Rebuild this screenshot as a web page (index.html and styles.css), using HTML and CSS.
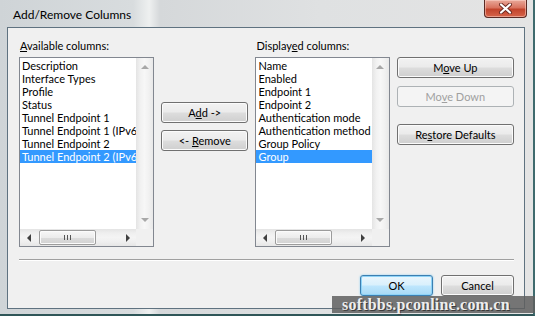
FILE: index.html
```html
<!DOCTYPE html>
<html lang="en">

<head>
  <meta charset="UTF-8" />
  <title>Add/Remove Columns</title>
  <link rel="stylesheet" href="styles.css">
</head>

<body>
  <div class="window">
    <div class="titlebar">
      <span class="title">Add/Remove Columns</span>
      <button class="close">
        <svg width="15" height="11" viewBox="0 0 15 11">
          <path d="M3 1.5 L12 9.5 M12 1.5 L3 9.5" stroke="#6b2a22" stroke-width="4" stroke-linecap="round" />
          <path d="M3 1.5 L12 9.5 M12 1.5 L3 9.5" stroke="#ffffff" stroke-width="2.2" stroke-linecap="round" />
        </svg>
      </button>
    </div>

    <div class="client">
      <div class="columns">
        <!-- 왼쪽 목록 -->
        <div class="group">
          <div class="caption"><u>A</u>vailable columns:</div>
          <div class="listbox">
            <div class="list-body">
              <ul class="items">
                <li>Description</li>
                <li>Interface Types</li>
                <li>Profile</li>
                <li>Status</li>
                <li>Tunnel Endpoint 1</li>
                <li>Tunnel Endpoint 1 (IPv6)</li>
                <li>Tunnel Endpoint 2</li>
                <li class="selected">Tunnel Endpoint 2 (IPv6)</li>
              </ul>
              <div class="vscroll">
                <span class="arrow-up"></span>
                <span class="arrow-down"></span>
              </div>
            </div>
            <div class="hscroll">
              <span class="hbtn"><span class="arrow-left"></span></span>
              <div class="htrack">
                <span class="thumb"><span class="grip"></span></span>
              </div>
              <span class="hbtn"><span class="arrow-right"></span></span>
              <span class="corner"></span>
            </div>
          </div>
        </div>

        <div class="mid-buttons">
          <button class="btn">A<u>d</u>d -&gt;</button>
          <button class="btn">&lt;- <u>R</u>emove</button>
        </div>

        <!-- 오른쪽 목록 -->
        <div class="group">
          <div class="caption">Display<u>e</u>d columns:</div>
          <div class="listbox">
            <div class="list-body">
              <ul class="items">
                <li>Name</li>
                <li>Enabled</li>
                <li>Endpoint 1</li>
                <li>Endpoint 2</li>
                <li>Authentication mode</li>
                <li>Authentication method</li>
                <li>Group Policy</li>
                <li class="selected">Group</li>
              </ul>
              <div class="vscroll">
                <span class="arrow-up"></span>
                <span class="arrow-down"></span>
              </div>
            </div>
            <div class="hscroll">
              <span class="hbtn"><span class="arrow-left"></span></span>
              <div class="htrack">
                <span class="thumb"><span class="grip"></span></span>
              </div>
              <span class="hbtn"><span class="arrow-right"></span></span>
              <span class="corner"></span>
            </div>
          </div>
        </div>

        <div class="side-buttons">
          <button class="btn">M<u>o</u>ve Up</button>
          <button class="btn" disabled>Mo<u>v</u>e Down</button>
          <button class="btn restore">Re<u>s</u>tore Defaults</button>
        </div>
      </div>

      <div class="separator"></div>

      <div class="footer">
        <button class="btn default">OK</button>
        <button class="btn">Cancel</button>
      </div>
    </div>

    <div class="watermark">softbbs.pconline.com.cn</div>
  </div>
</body>

</html>
```

FILE: styles.css
```css
* {
  box-sizing: border-box;
}

body {
  margin: 0;
  width: 535px;
  height: 316px;
  overflow: hidden;
  font-family: Lato, "Liberation Sans", sans-serif;
  font-size: 11px;
  color: #000;
}

.window {
  position: relative;
  width: 535px;
  height: 316px;
  padding: 0 8px 7px 7px;
  background: linear-gradient(90deg, #cfd4d7 0%, #d8dcde 25%, #eef0f0 28%, #d5d8da 30%, #dfe1e2 60%, #e4e4e4 100%);
  border-right: 2px solid #3f6b6e;
  border-bottom: 2px solid #2f5658;
}

.titlebar {
  height: 27px;
  display: flex;
  justify-content: space-between;
  align-items: flex-start;
}

.title {
  font-size: 12px;
  padding: 7px 0 0 6px;
  color: #000;
}

.close {
  width: 43px;
  height: 18px;
  margin-right: -2px;
  padding: 0;
  border: 1px solid #5a2a24;
  border-top: none;
  border-radius: 0 0 4px 4px;
  background: linear-gradient(#e9a99a 0%, #d9735f 45%, #c2442c 55%, #d6644a 100%);
  box-shadow: inset 0 0 0 1px rgba(255, 220, 210, 0.5);
  display: flex;
  justify-content: center;
  align-items: center;
}

.client {
  height: 282px;
  border: 1px solid #5f7280;
  background: #f0f0f0;
  padding: 10px 10px 0 11px;
}

.columns {
  display: flex;
  gap: 7px;
}

.group {
  width: 135px;
}

.caption {
  height: 15px;
  line-height: 15px;
  margin-bottom: 4px;
  padding-left: 1px;
}

.listbox {
  height: 190px;
  border: 1px solid #828790;
  background: #fff;
  display: flex;
  flex-direction: column;
}

.list-body {
  flex: 1;
  display: flex;
  min-height: 0;
}

.items {
  flex: 1;
  list-style: none;
  margin: 0;
  padding: 1px 0 0 0;
  overflow: hidden;
}

.items li {
  height: 13px;
  line-height: 13px;
  padding-left: 2px;
  white-space: nowrap;
  overflow: hidden;
}

.items li.selected {
  background: #3399ff;
  color: #fff;
}

.vscroll {
  width: 17px;
  background: linear-gradient(90deg, #e4e4e4, #f1f1f1 25%, #f7f7f7 50%, #f1f1f1 75%, #e8e8e8);
  display: flex;
  flex-direction: column;
  justify-content: space-between;
  align-items: center;
  padding: 7px 0 7px;
}

.arrow-up {
  border-left: 4px solid transparent;
  border-right: 4px solid transparent;
  border-bottom: 4px solid #a8a8a8;
}

.arrow-down {
  border-left: 4px solid transparent;
  border-right: 4px solid transparent;
  border-top: 4px solid #a8a8a8;
}

.hscroll {
  height: 17px;
  display: flex;
  background: linear-gradient(#e4e4e4, #efefef 25%, #f4f4f4 50%, #efefef 75%, #e6e6e6);
}

.hbtn {
  width: 17px;
  display: flex;
  justify-content: center;
  align-items: center;
}

.arrow-left {
  border-top: 4px solid transparent;
  border-bottom: 4px solid transparent;
  border-right: 4px solid #404040;
}

.arrow-right {
  border-top: 4px solid transparent;
  border-bottom: 4px solid transparent;
  border-left: 4px solid #404040;
}

.htrack {
  flex: 1;
  padding: 1px 0;
}

.thumb {
  display: flex;
  justify-content: center;
  align-items: center;
  width: 57px;
  height: 15px;
  margin-left: 2px;
  border: 1px solid #9c9c9c;
  border-radius: 2px;
  background: linear-gradient(#f7f7f7 0%, #ececec 50%, #dcdcdc 51%, #d2d2d2 100%);
  box-shadow: inset 0 0 0 1px #fbfbfb;
}

.grip {
  width: 7px;
  height: 5px;
  background: repeating-linear-gradient(90deg, #555 0 1px, transparent 1px 3px);
}

.corner {
  width: 17px;
  background: #f0f0f0;
}

.btn {
  font-family: Lato, "Liberation Sans", sans-serif;
  font-size: 11px;
  color: #000;
  height: 21px;
  padding: 0;
  border: 1px solid #707070;
  border-radius: 3px;
  background: linear-gradient(#f2f2f2 0%, #ebebeb 48%, #dddddd 52%, #cfcfcf 100%);
  box-shadow: inset 0 0 0 1px #fbfbfb;
}

.btn:disabled {
  color: #a0a0a0;
  border-color: #adb2b5;
  background: #f4f4f4;
  box-shadow: none;
}

.btn.default {
  border-color: #3c7fb1;
  background: linear-gradient(#eaf6fd 0%, #d9f0fc 48%, #bee6fd 52%, #a7d9f5 100%);
  box-shadow: inset 0 0 0 1px #8ed3f7, 0 0 2px #7ecbf1;
}

.mid-buttons {
  width: 88px;
  display: flex;
  flex-direction: column;
  gap: 7px;
  padding-top: 64px;
}

.side-buttons {
  width: 118px;
  display: flex;
  flex-direction: column;
  gap: 8px;
  padding-top: 19px;
}

.side-buttons .restore {
  margin-top: 9px;
}

.separator {
  margin-top: 12px;
  border-top: 1px solid #a0a0a0;
  border-bottom: 1px solid #ffffff;
}

.footer {
  display: flex;
  justify-content: flex-end;
  gap: 8px;
  margin-top: 14px;
}

.footer .btn {
  width: 73px;
}

/* 워터마크 */
.watermark {
  position: absolute;
  left: 332px;
  top: 296px;
  width: 203px;
  height: 17px;
  background: rgba(95, 95, 95, 0.85);
  font-family: "Liberation Serif", serif;
  font-weight: bold;
  font-size: 16px;
  letter-spacing: 0.2px;
  line-height: 17px;
  color: #eeeeee;
  text-shadow: 1px 1px 0 #3a3a3a;
  padding-left: 10px;
  white-space: nowrap;
}
```
